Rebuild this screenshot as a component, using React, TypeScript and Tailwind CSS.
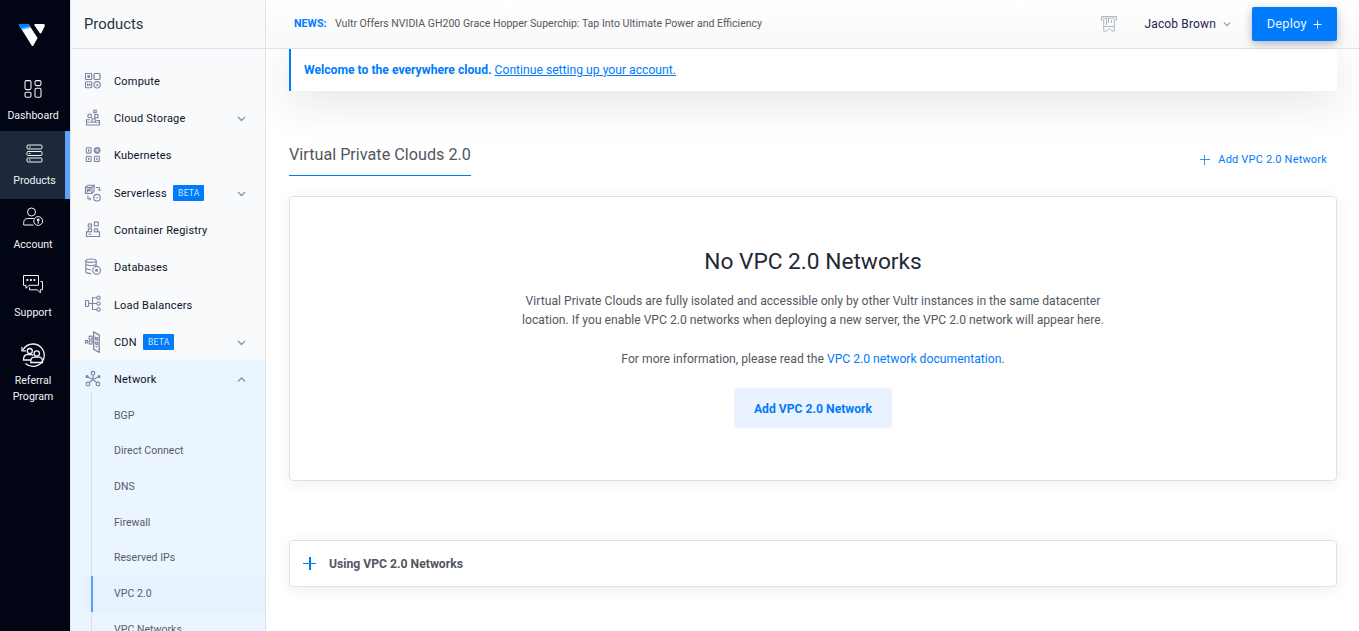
import React from "react";

const I = ({ children }: { children: React.ReactNode }) => (
  <svg width="18" height="18" viewBox="0 0 18 18" fill="none" stroke="currentColor" strokeWidth="1.1" className="shrink-0">
    {children}
  </svg>
);

const Compute = () => (
  <I>
    <rect x="1.5" y="1.5" width="6.2" height="6" rx=".6" />
    <rect x="3.9" y="3.8" width="1.5" height="1.5" fill="currentColor" />
    <rect x="10" y="1.5" width="6" height="6" rx="1" />
    <path d="M12 .8v1.4M14 .8v1.4M12 6.8v1.4M14 6.8v1.4M9.3 3.5h1.2M9.3 5.5h1.2M15.5 3.5h1.2M15.5 5.5h1.2" strokeWidth=".7" />
    <rect x="1.5" y="9.8" width="6.2" height="6" rx=".8" />
    <path d="M3 12.8h3.2M3.5 11.6v2.4M5.8 11.6v2.4" />
    <circle cx="13.1" cy="12.8" r="3.2" />
    <path d="M11.6 13.3h3M13.1 12v1.6" />
  </I>
);
const Storage = () => (
  <I>
    <rect x="9.8" y="1.3" width="2.4" height="2.4" />
    <rect x="4" y="5.3" width="3.3" height="3.2" rx=".5" />
    <rect x="10.8" y="5.5" width="3.2" height="3.2" />
    <path d="M6 10.7H2.5v5.3h13v-4.5h-3.2" />
    <rect x="7.8" y="9.8" width="3.4" height="3.2" />
    <path d="M2.5 13.3h5M11 13.3h4.5" strokeWidth=".8" />
  </I>
);
const Kube = () => (
  <I>
    <rect x="2.3" y="1.7" width="4.8" height="5.4" rx=".6" />
    <rect x="2.3" y="10.3" width="4.8" height="5.2" rx=".6" />
    <rect x="10.5" y="10.3" width="4.8" height="5.2" rx=".6" />
    <circle cx="13.1" cy="4.3" r="2.7" fill="currentColor" fillOpacity=".45" strokeWidth="1.4" />
    <path d="M4.7 3.3v2.4M4.7 11.8v2.4M12.9 11.8v2.4" strokeWidth="1.3" />
  </I>
);
const Serverless = () => (
  <I>
    <rect x="1.5" y="3.4" width="6.4" height="6" />
    <path d="M1.5 3.4 3.7 1.2h6.4L7.9 3.4M10.1 1.2v6L7.9 9.4M3.3 5v2.7L6 5v2.7M3.3 5H6" />
    <path d="M11.8 3.5h3.6v3.3M13.9 5.5l1.5 1.5 1.5-1.5" strokeWidth="1" />
    <path d="M3.9 11.5v3.5h2.6M5.3 13.5l1.5 1.5-1.5 1.5" strokeWidth="1" />
    <circle cx="13" cy="13.7" r="3.3" />
    <path d="m11.7 13.7 1 1 1.8-2" strokeWidth=".9" />
  </I>
);
const Registry = () => (
  <I>
    <rect x="10.4" y="1" width="3.9" height="3.8" />
    <rect x="4.3" y="3" width="3.2" height="2.9" />
    <rect x="4.3" y="7.9" width="3.2" height="2.9" />
    <rect x="10.4" y="7.9" width="3.2" height="2.9" />
    <path d="M4 10.9H2.5v4.6h13v-4.6h-1.5M4.4 13.3h3" />
  </I>
);
const Databases = () => (
  <I>
    <ellipse cx="7" cy="2.7" rx="5.2" ry="1.7" />
    <path d="M1.8 2.8v11c0 .8 2 1.7 5.2 1.8M12.2 2.8v5M1.8 6.4c1 1 2.8 1.3 5.2 1.3s4.2-.3 5.2-1.3M1.8 10.4c1 1 2.7 1.3 5 1.3" />
    <circle cx="12.6" cy="12.3" r="3.9" />
    <circle cx="12.6" cy="12.3" r="1" fill="currentColor" />
  </I>
);
const Balancer = () => (
  <I>
    <rect x="1.5" y="5.5" width="3.2" height="6" rx=".8" />
    <path d="M4.9 8.5h8M13 2.7H8.5v11.8H13" />
    <circle cx="14.5" cy="2.7" r="1.7" />
    <circle cx="14.5" cy="8.5" r="1.7" />
    <circle cx="14.5" cy="14.5" r="1.7" />
  </I>
);
const Cdn = () => (
  <svg width="18" height="22" viewBox="0 0 18 22" fill="none" stroke="currentColor" strokeWidth="1.1" className="shrink-0">
    <path d="M9.7 1v17.3l5.5 2.9V4z" strokeWidth="1.3" />
    <rect x="1.4" y="9.5" width="2.2" height="2.4" />
    <rect x="5.2" y="5.2" width="3" height="3" />
    <rect x="5.2" y="10" width="3" height="3" />
    <path d="M11.6 6.3l1.9.8v2l-1.9-.5zM11.6 11l1.9.5v2l-1.9-.5zM11.6 15.2l1.9.8" />
  </svg>
);
const Network = () => (
  <I>
    <circle cx="9" cy="3.2" r="1.8" />
    <circle cx="4" cy="14" r="1.9" />
    <circle cx="14" cy="14" r="1.9" />
    <circle cx="3" cy="6.5" r="1" fill="currentColor" />
    <circle cx="15" cy="6.5" r="1" fill="currentColor" />
    <path d="M9 5v4M3.6 7 9 9.5 14.4 7M9 9.5l-3.7 3M9 9.5l3.7 3" />
  </I>
);

const Chevron = ({ up = false, s = 9 }: { up?: boolean; s?: number }) => (
  <svg width={s} height={s} viewBox="0 0 9 9" fill="none" stroke="currentColor" strokeWidth="1.3">
    <path d={up ? "M1 6.5 4.5 3 8 6.5" : "M1 3 4.5 6.5 8 3"} />
  </svg>
);

const items = [
  { label: "Compute", icon: <Compute /> },
  { label: "Cloud Storage", icon: <Storage />, chev: true },
  { label: "Kubernetes", icon: <Kube /> },
  { label: "Serverless", icon: <Serverless />, beta: true, chev: true },
  { label: "Container Registry", icon: <Registry /> },
  { label: "Databases", icon: <Databases /> },
  { label: "Load Balancers", icon: <Balancer /> },
  { label: "CDN", icon: <Cdn />, beta: true, chev: true },
];
const subs = ["BGP", "Direct Connect", "DNS", "Firewall", "Reserved IPs", "VPC 2.0", "VPC Networks"];

function Row({ label, icon, beta, chev, up }: { label: string; icon: React.ReactNode; beta?: boolean; chev?: boolean; up?: boolean }) {
  return (
    <div className="flex h-[37.3px] shrink-0 items-center pl-[13px] pr-[19px] text-[11px] tracking-[0.2px] text-[#0d1226]">
      <span className="flex w-[30px] text-[#7c84a3]">{icon}</span>
      <span className="pt-[3px]">{label}</span>
      {beta && <span className="ml-[6.5px] flex h-4 w-[31px] items-center justify-center rounded-[1px] bg-[#007bfc] pt-px text-[8.6px] text-[#cfe6ff]">BETA</span>}
      {chev && (
        <span className="ml-auto pt-px text-[#7f95b5]">
          <Chevron up={up} />
        </span>
      )}
    </div>
  );
}

function Sidebar() {
  return (
    <aside className="flex h-full w-[196px] shrink-0 flex-col overflow-hidden border-x border-[#e2e4e9] bg-[#f9fafc]">
      <div className="flex h-[49px] shrink-0 items-center border-b border-[#e2e4e9] pl-[13px] text-[14.8px] text-[#2a3342]">Products</div>
      <div className="flex flex-col pt-[13px]">
        {items.map((it) => (
          <Row key={it.label} {...it} />
        ))}
        <div className="bg-[#eaf5ff]">
          <Row label="Network" icon={<Network />} chev up />
          <div className="-mt-[6px] ml-[13px] bg-[linear-gradient(#d8dfeb,#d8dfeb)] bg-[length:1px_100%] bg-[position:7px_0] bg-no-repeat pt-[6px]">
            {subs.map((s) => (
              <div key={s} className={s === "VPC 2.0" ? "flex h-[35.7px] items-center bg-[#e7f1ff]" : "flex h-[35.7px] items-center"}>
                <span className={s === "VPC 2.0" ? "ml-[7px] h-full w-[2px] bg-[#579dfb]" : "ml-[7px] w-[2px]"} />
                <span className="ml-[21px] text-[10.5px] tracking-[0.04px] text-[#565c6d]">{s}</span>
              </div>
            ))}
          </div>
        </div>
      </div>
    </aside>
  );
}

function Rail() {
  return (
    <nav className="flex h-full w-[70px] shrink-0 flex-col bg-[#020513] text-center text-[10.6px] leading-4 text-[#f1f3f8]">
      <div className="flex h-[67px] pl-[18px] pt-[23px]">
        <svg width="28" height="24" viewBox="0 0 28 24">
          <defs>
            <clipPath id="bar">
              <path d="M1.8 1h7.7c.7 0 1.2.3 1.6.9l8.5 13.1-4.2 7.4c-.5.8-1.2.8-1.7 0L1.2 2.4C.7 1.6 1 1 1.8 1z" />
            </clipPath>
          </defs>
          <g clipPath="url(#bar)">
            <rect width="28" height="24" fill="#fff" />
            <path d="M0 0h16L13 4.8 4 6.8 0 9z" fill="#51b9ff" />
            <path d="M0 0h14l-2 3.2L2 5.2z" fill="#007bfc" />
          </g>
          <path d="M17.5 1h7.800c1.300 0 1.900.8 1.400 2.200l-3.200 6.500c-.5.9-1.400.9-2 0L16.500 2.500C16 1.600 16.400 1 17.500 1z" fill="#fff" />
        </svg>
      </div>
      <div className="flex h-16 flex-col items-center pr-1 pt-[12px]">
        <svg width="20" height="20" viewBox="0 0 20 20" fill="none" stroke="currentColor" strokeWidth="1.1">
          <rect x="2" y="1.6" width="6" height="9" rx="1.5" />
          <rect x="12" y="1.6" width="6" height="5" rx="1.5" />
          <rect x="2" y="13.2" width="6" height="5" rx="1.5" />
          <rect x="12" y="9.2" width="6" height="9" rx="1.5" />
        </svg>
        <span className="mt-[9px]">Dashboard</span>
      </div>
      <div className="flex h-[68px] flex-col items-center border-r-[5px] border-[#60a2f8] bg-[#1d283a] pl-[4px] pt-[12px]">
        <svg width="18" height="20" viewBox="0 0 18 20" fill="none" stroke="currentColor">
          <rect x="1" y="2" width="15" height="4" rx="1" />
          <rect x="1" y="8.5" width="15" height="4" rx="1" />
          <rect x="1" y="15" width="15" height="4" rx="1" />
          <path d="M3 4h1.5M3 10.5h1.5M3 17h1.5" />
        </svg>
        <span className="mt-[10px]">Products</span>
      </div>
      <div className="flex h-[67px] flex-col items-center pr-1 pt-[7px]">
        <svg width="22" height="22" viewBox="0 0 22 22" fill="none" stroke="currentColor">
          <circle cx="9.5" cy="6" r="4" />
          <path d="M11.5 19H1.7v-2.4c0-2.500 1.500-4.100 4-4.100h6" />
          <circle cx="16.2" cy="15" r="4.400" />
          <path d="M16.2 17.800v-3M15 14.300h2.400" />
          <circle cx="16.2" cy="13.700" r=".9" fill="currentColor" />
        </svg>
        <span className="mt-[9px]">Account</span>
      </div>
      <div className="flex h-[68px] flex-col items-center pr-1 pt-[7px]">
        <svg width="22" height="22" viewBox="0 0 22 22" fill="none" stroke="currentColor">
          <path d="M1.500 2.500h15v9.800H7l-3 3v-3H1.500z" />
          <path d="M18.500 8.500h2v8.300h-2.200v3l-3-3H7.500v-2.500" />
          <path d="M4.500 7h1.800M8 7h1.800M11.500 7h1.800" strokeWidth="2" />
        </svg>
        <span className="mt-[10px]">Support</span>
      </div>
      <div className="flex flex-col items-center pr-1 pt-[8px]">
        <svg width="26" height="26" viewBox="0 0 26 26" fill="none" stroke="currentColor" strokeWidth="1.3">
          <path d="M3 8C5.500 3.500 9 2 13 2a11.200 11.200 0 1 1-7.500 19.500" />
          <path d="M2 5v3.800h4" />
          <circle cx="9.800" cy="9" r="2.500" />
          <circle cx="16.800" cy="11.500" r="2.700" />
          <path d="M11 18H3.500c0-3.500 1.700-5.500 4.200-5.500h3.500c1 0 1.600.4 2 .8M10.800 20.500v-1.300c0-2.300 1.500-4 3.700-4h4.300c2.200 0 3.700 1.700 3.700 4v1.300z" />
        </svg>
        <span className="mt-[5px] w-[50px]">Referral Program</span>
      </div>
    </nav>
  );
}

export default function App() {
  return (
    <div className="flex h-[631px] w-full overflow-hidden bg-white font-['Roboto',sans-serif]">
      <Rail />
      <Sidebar />
      <div className="flex min-w-0 flex-1 flex-col">
        <header className="flex h-[49px] shrink-0 items-center border-b border-[#e0e1e7] bg-gradient-to-b from-white to-[#f8f8f8] pl-[28px] pr-[22px]">
          <span className="w-[33px] text-[10.7px] font-bold text-[#007bfc]">NEWS:</span>
          <span className="ml-[8px] text-[10.56px] text-[#55585f]">Vultr Offers NVIDIA GH200 Grace Hopper Superchip: Tap Into Ultimate Power and Efficiency</span>
          <svg className="ml-auto text-[#b0b6c9]" width="18" height="18" viewBox="0 0 18 18" fill="none" stroke="currentColor">
            <path d="M1.500 1.500h15v3.500h-2.200v11h-2l-2.800-2.500L6.700 16h-3V5H1.500zM3 3.200h12M6.500 4v6M8.500 4v4M11.500 5v3M4 11.500h10" />
          </svg>
          <span className="ml-[26px] text-[12px] tracking-[0.15px] text-[#1b2550]">Jacob Brown</span>
          <span className="ml-[7px] text-[#8a96b8]"><Chevron s={8} /></span>
          <button className="ml-[21px] flex h-[34px] w-[85px] items-center justify-center gap-[6.500px] rounded-[2px] bg-[#007bfc] text-[12.800px] tracking-[0.200px] text-[#e9f4ff] shadow-[0_3px_10px_rgba(40,60,90,0.350)]">
            Deploy
            <svg width="9" height="9" viewBox="0 0 9 9" stroke="currentColor"><path d="M.5 4.500h8M4.500.5v8" /></svg>
          </button>
        </header>
        <main className="flex flex-1 flex-col overflow-hidden pl-[23px] pr-[22px]">
          <div className="flex h-[42px] shrink-0 items-center border-l-2 border-[#007bfc] bg-white pl-[13px] text-[12.170px] text-[#007bfc] shadow-[0_10px_45px_rgba(25,35,50,0.130)]">
            <span><b>Welcome to the everywhere cloud.</b> <a className="underline">Continue setting up your account.</a></span>
          </div>
          <div className="mt-[52px] flex shrink-0 items-start justify-between">
            <h1 className="h-[33px] border-b border-[#007bfc] text-[16.220px] leading-[24px] text-[#53565d]">Virtual Private Clouds 2.0</h1>
            <a className="mr-[10px] mt-[9px] flex items-center gap-[8px] text-[11px] leading-4 tracking-[0.180px] text-[#007bfc]">
              <svg width="10" height="10" viewBox="0 0 10 10" stroke="currentColor" strokeWidth=".8"><path d="M0 4.500h10M4.500 0v10" /></svg>
              Add VPC 2.0 Network
            </a>
          </div>
          <section className="mt-[20px] flex h-[285px] shrink-0 flex-col items-center rounded-[4px] border border-[#e0e1e6] bg-white text-[12.160px] leading-[19.400px] text-[#55585f] shadow-[0_3px_16px_rgba(0,0,0,0.070)]">
            <h2 className="mt-[49px] text-[22.700px] leading-[32px] text-[#1f2937]">No VPC 2.0 Networks</h2>
            <p className="mt-[14px] w-[620px] text-center">
              Virtual Private Clouds are fully isolated and accessible only by other Vultr instances in the same datacenter
              <br />
              location. If you enable VPC 2.0 networks when deploying a new server, the VPC 2.0 network will appear here.
            </p>
            <p className="mt-[19px]">For more information, please read the <a className="text-[#007bfc]">VPC 2.0 network documentation</a>.</p>
            <button className="mt-[18.800px] h-[40px] w-[158px] rounded-[2px] bg-[#ebf2ff] pt-[3px] text-[12.160px] font-bold text-[#007bfc]">Add VPC 2.0 Network</button>
          </section>
          <section className="mt-[59px] flex h-[47px] shrink-0 items-center rounded-[4px] border border-[#e0e1e6] bg-white pl-[13px] text-[12.180px] font-bold text-[#53565d] shadow-[0_3px_16px_rgba(0,0,0,0.070)]">
            <svg width="13" height="13" viewBox="0 0 13 13" stroke="#007bfc"><path d="M0 6.500h13" /><path d="M7 0v13" strokeWidth="2" /></svg>
            <span className="ml-[13px] pt-[2px]">Using VPC 2.0 Networks</span>
          </section>
        </main>
      </div>
    </div>
  );
}
